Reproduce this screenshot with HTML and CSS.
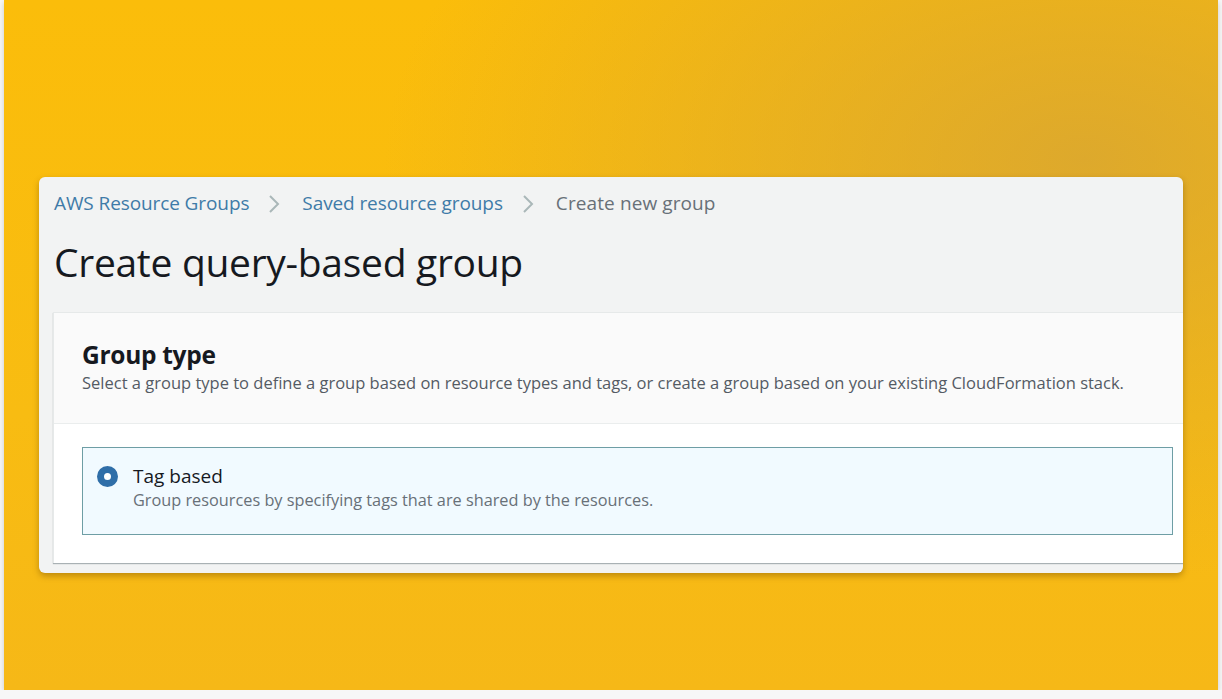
FILE: index.html
```html
<!DOCTYPE html>
<html>
<head>
<meta charset="utf-8">
<link rel="stylesheet" href="styles.css">
</head>
<body>
<div class="frame">
  <div class="card">
    <div class="head">
      <nav class="crumbs">
        <a class="crumb link">AWS Resource Groups</a>
        <svg class="chev" width="12" height="20" viewBox="0 0 12 20"><path d="M2 2 L10 10 L2 18" fill="none" stroke="#aab7b8" stroke-width="2"/></svg>
        <a class="crumb link">Saved resource groups</a>
        <svg class="chev" width="12" height="20" viewBox="0 0 12 20"><path d="M2 2 L10 10 L2 18" fill="none" stroke="#aab7b8" stroke-width="2"/></svg>
        <span class="crumb current">Create new group</span>
      </nav>
      <h1 class="title">Create query-based group</h1>
    </div>
    <div class="container">
      <div class="container-head">
        <h2 class="section-title">Group type</h2>
        <p class="section-desc">Select a group type to define a group based on resource types and tags, or create a group based on your existing CloudFormation stack.</p>
      </div>
      <div class="container-body">
        <div class="tile">
          <span class="radio"></span>
          <div class="tile-text">
            <div class="tile-label">Tag based</div>
            <div class="tile-desc">Group resources by specifying tags that are shared by the resources.</div>
          </div>
        </div>
      </div>
    </div>
  </div>
</div>
</body>
</html>
```
FILE: styles.css
```css
html, body {
  margin: 0;
  padding: 0;
  background: #f7f7f7;
}
body {
  font-family: "Open Sans", "Noto Sans", sans-serif;
}
.frame {
  margin: 0 4px 0 4px;
  height: 690px;
  box-sizing: border-box;
  padding: 177px 35px 0 35px;
  background:
    radial-gradient(ellipse 700px 420px at 1080px 160px, rgba(214,164,52,0.8), rgba(214,164,52,0) 100%),
    linear-gradient(180deg, #fbbd0a 0%, #f8bc12 60%, #f6b817 100%);
  box-shadow: 0 2px 6px rgba(0,0,0,0.18);
}
.card {
  background: #f2f3f3;
  border-radius: 6px;
  overflow: hidden;
  box-shadow: 0 3px 6px rgba(120,80,0,0.45);
  padding-bottom: 10px;
}
.head {
  padding: 14px 15px 28px 15px;
}
.crumbs {
  display: flex;
  align-items: center;
  height: 25px;
}
.crumb {
  font-size: 19px;
  line-height: 25px;
  letter-spacing: -0.1px;
}
.link { color: #3f7ba8; }
.current { color: #687078; letter-spacing: 0.1px; }
.chev {
  margin: 0 22px 0 19px;
}
.title {
  margin: 24px 0 0 0;
  font-size: 39px;
  font-weight: 400;
  line-height: 44px;
  color: #16191f;
  letter-spacing: -0.3px;
}
.container {
  margin-left: 14px;
  margin-right: -19px;
  background: #fff;
  border-top: 1px solid #e6e9e9;
  border-left: 1px solid #e6e9e9;
  box-shadow: 0 1px 1px rgba(0,28,36,0.3);
}
.container-head {
  background: #fafafa;
  border-bottom: 1px solid #eaeded;
  padding: 27px 28px 28px 28px;
}
.section-title {
  margin: 0;
  font-size: 24.5px;
  font-weight: 700;
  line-height: 30px;
  color: #16191f;
  letter-spacing: -0.3px;
}
.section-desc {
  margin: 0;
  font-size: 16.5px;
  line-height: 25px;
  color: #545b64;
}
.container-body {
  padding: 23px 28px 28px 28px;
}
.tile {
  display: flex;
  align-items: flex-start;
  width: 1091px;
  box-sizing: border-box;
  height: 88px;
  background: #f1faff;
  border: 1px solid #6e9ea5;
  padding: 15px 14px;
}
.radio {
  flex: none;
  width: 21px;
  height: 21px;
  box-sizing: border-box;
  border-radius: 50%;
  border: 7px solid #2f6ea8;
  background: #fff;
  margin: 3px 15px 0 0;
}
.tile-label {
  font-size: 19px;
  line-height: 26px;
  color: #16191f;
}
.tile-desc {
  font-size: 16.3px;
  line-height: 22px;
  color: #687078;
}
```
